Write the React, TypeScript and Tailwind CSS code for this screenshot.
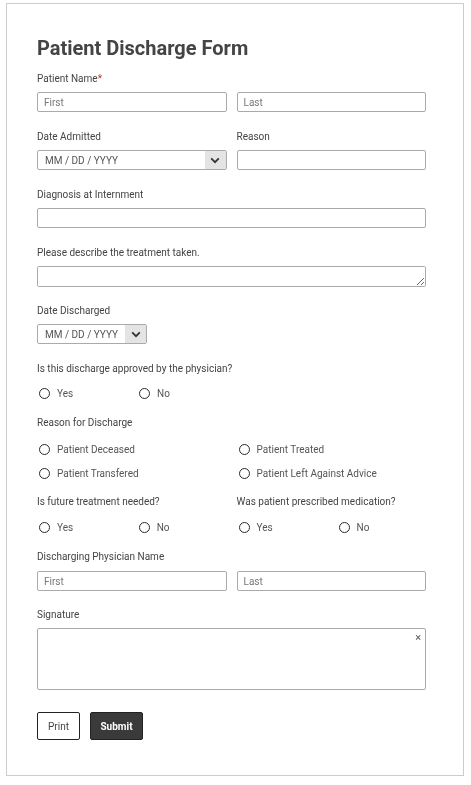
import React from "react";

const font = { fontFamily: "Roboto, 'Liberation Sans', sans-serif" };

function Label({ children, className = "" }: { children: React.ReactNode; className?: string }) {
  return <div className={`h-[14px] pt-[1px] text-[10px] leading-[14px] text-[#444] ${className}`}>{children}</div>;
}

function TextInput({ placeholder = "" }: { placeholder?: string }) {
  return (
    <div className="flex h-[20px] items-center rounded-[2px] border border-[#aaa] bg-white pl-[6px] text-[10px] text-[#777]">
      {placeholder}
    </div>
  );
}

function DateSelect({ className = "" }: { className?: string }) {
  return (
    <div className={`flex h-[20px] items-stretch overflow-hidden rounded-[2px] border border-[#aaa] bg-white ${className}`}>
      <div className="flex flex-1 items-center pl-[7px] text-[10px] text-[#555]">MM / DD / YYYY</div>
      <div className="flex w-[21px] items-center justify-center bg-[#e4e4e4]">
        <svg width="10" height="7" viewBox="0 0 10 7">
          <path d="M1.2 1.4 L5 5.2 L8.8 1.4" fill="none" stroke="#333" strokeWidth="1.8" />
        </svg>
      </div>
    </div>
  );
}

function Radio({ label, className = "" }: { label: string; className?: string }) {
  return (
    <div className={`flex h-[16px] items-center ${className}`}>
      <span className="ml-[2px] h-[11px] w-[11px] rounded-full border-[1.6px] border-[#2a2a2a] bg-white" />
      <span className="ml-[7px] text-[10px] text-[#555]">{label}</span>
    </div>
  );
}

export default function App() {
  return (
    <div className="min-h-[785px] bg-white" style={font}>
      <div className="ml-[6px] mt-[3px] h-[773px] w-[458px] border border-[#ccc] bg-white pl-[30px] pt-[32px]">
        <div className="w-[389px]">
          <h1 className="h-[24px] text-[20px] font-bold leading-[24px] text-[#444]">Patient Discharge Form</h1>

          {/* Patient Name */}
          <div className="mt-[11px]">
            <Label>
              Patient Name<span className="text-[#c0392b]">*</span>
            </Label>
            <div className="mt-[7px] grid grid-cols-2 gap-[10px]">
              <TextInput placeholder="First" />
              <TextInput placeholder="Last" />
            </div>
          </div>

          {/* Date Admitted / Reason */}
          <div className="mt-[17px] grid grid-cols-2 gap-[10px]">
            <div>
              <Label>Date Admitted</Label>
              <DateSelect className="mt-[7px]" />
            </div>
            <div>
              <Label>Reason</Label>
              <div className="mt-[7px]">
                <TextInput />
              </div>
            </div>
          </div>

          {/* Diagnosis */}
          <div className="mt-[17px]">
            <Label>Diagnosis at Internment</Label>
            <div className="mt-[7px]">
              <TextInput />
            </div>
          </div>

          {/* Treatment */}
          <div className="mt-[17px]">
            <Label>Please describe the treatment taken.</Label>
            <textarea className="mt-[7px] block h-[21px] w-full resize rounded-[2px] border border-[#aaa] bg-white outline-none" />
          </div>

          {/* Date Discharged */}
          <div className="mt-[16px]">
            <Label>Date Discharged</Label>
            <DateSelect className="mt-[7px] w-[110px]" />
          </div>

          {/* Approved */}
          <div className="mt-[17px]">
            <Label>Is this discharge approved by the physician?</Label>
            <div className="mt-[10px] flex">
              <Radio label="Yes" className="w-[100px]" />
              <Radio label="No" className="w-[100px]" />
            </div>
          </div>

          {/* Reason for Discharge */}
          <div className="mt-[14px]">
            <Label>Reason for Discharge</Label>
            <div className="mt-[12px] grid grid-cols-2 gap-x-[10px] gap-y-[8px]">
              <Radio label="Patient Deceased" />
              <Radio label="Patient Treated" />
              <Radio label="Patient Transfered" />
              <Radio label="Patient Left Against Advice" />
            </div>
          </div>

          {/* Future / Medication */}
          <div className="mt-[13px] grid grid-cols-2 gap-[10px]">
            <div>
              <Label>Is future treatment needed?</Label>
              <div className="mt-[11px] flex">
                <Radio label="Yes" className="w-[100px]" />
                <Radio label="No" className="w-[90px]" />
              </div>
            </div>
            <div>
              <Label>Was patient prescribed medication?</Label>
              <div className="mt-[11px] flex">
                <Radio label="Yes" className="w-[100px]" />
                <Radio label="No" className="w-[89px]" />
              </div>
            </div>
          </div>

          {/* Physician Name */}
          <div className="mt-[14px]">
            <Label>Discharging Physician Name</Label>
            <div className="mt-[8px] grid grid-cols-2 gap-[10px]">
              <TextInput placeholder="First" />
              <TextInput placeholder="Last" />
            </div>
          </div>

          {/* Signature */}
          <div className="mt-[16px]">
            <Label>Signature</Label>
            <div className="relative mt-[7px] h-[62px] rounded-[2px] border border-[#aaa] bg-white">
              <span className="absolute right-[4px] top-[2px] text-[11px] leading-[14px] text-[#555]">×</span>
            </div>
          </div>

          {/* Buttons */}
          <div className="mt-[22px] flex gap-[10px]">
            <button className="h-[28px] w-[43px] rounded-[2px] border border-[#222] bg-white text-[10px] text-[#444]">
              Print
            </button>
            <button className="h-[28px] w-[53px] rounded-[2px] border border-[#222] bg-[#3a3a3a] text-[10px] font-bold text-white">
              Submit
            </button>
          </div>
        </div>
      </div>
    </div>
  );
}
